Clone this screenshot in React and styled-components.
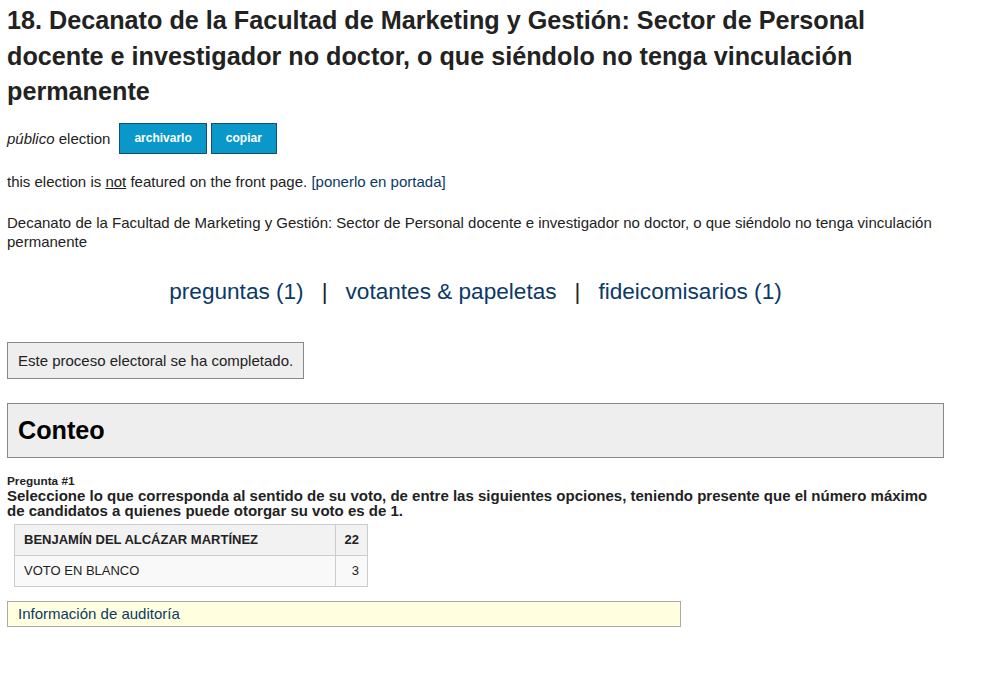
import React from "react";
import styled, { createGlobalStyle } from "styled-components";

const Global = createGlobalStyle`
  html, body { margin: 0; padding: 0; background: #fff; }
  body { font-family: "Liberation Sans", Arial, sans-serif; color: #222; }
`;

const Page = styled.div`
  width: 937px;
  padding: 3px 7px 40px 7px;
`;

const Title = styled.h2`
  margin: 0;
  font-size: 25.2px;
  line-height: 35.5px;
  font-weight: bold;
  color: #222;
`;

const MetaRow = styled.div`
  display: flex;
  align-items: center;
  margin-top: 13px;
  font-size: 15px;
`;

const MetaText = styled.span`
  margin-right: 9px;
  em { font-style: italic; }
`;

const Button = styled.button`
  font-family: "Liberation Sans", Arial, sans-serif;
  font-size: 12px;
  font-weight: bold;
  color: #fff;
  background: #0a98cb;
  border: 1px solid #134f6e;
  height: 31px;
  padding: 0 14px;
  margin-right: 4px;
  cursor: pointer;
`;

const Para = styled.p`
  margin: ${(p) => p.$mt || 0}px 0 0 0;
  font-size: 15px;
  line-height: 19px;
`;

const Link = styled.a`
  color: #0b3a66;
  text-decoration: none;
`;

const Nav = styled.div`
  display: flex;
  justify-content: center;
  align-items: center;
  gap: 18px;
  margin-top: 28px;
  font-size: 22.6px;
  line-height: 26px;
  color: #0b3a66;
`;

const NavLink = styled.a`
  color: #0b3a66;
  text-decoration: none;
`;

const Sep = styled.span`
  color: #222;
`;

const Notice = styled.div`
  display: inline-block;
  margin-top: 37px;
  padding: 9px 10px;
  background: #eee;
  border: 1px solid #888;
  font-size: 15px;
  line-height: 17px;
`;

const SectionBox = styled.div`
  margin-top: 24px;
  padding: 0 10px;
  height: 53px;
  display: flex;
  align-items: center;
  background: #eee;
  border: 1px solid #888;
`;

const SectionTitle = styled.h2`
  margin: 0;
  font-size: 25.2px;
  font-weight: bold;
  color: #000;
`;

const QLabel = styled.div`
  margin-top: 17px;
  font-size: 11.8px;
  font-weight: bold;
  line-height: 13px;
`;

const QText = styled.div`
  font-size: 15px;
  font-weight: bold;
  line-height: 15px;
`;

const Table = styled.table`
  margin: 6px 0 0 7px;
  border-collapse: collapse;
  font-size: 13px;
`;

const Row = styled.tr`
  background: ${(p) => (p.$winner ? "#f2f2f2" : "#f9f9f9")};
`;

const NameCell = styled.td`
  border: 1px solid #ccc;
  height: 30px;
  padding: 0 10px 0 9px;
  width: 301px;
  font-weight: ${(p) => (p.$winner ? "bold" : "normal")};
`;

const CountCell = styled.td`
  border: 1px solid #ccc;
  padding: 0 8px;
  text-align: right;
  width: 15px;
  font-weight: ${(p) => (p.$winner ? "bold" : "normal")};
`;

const Audit = styled.div`
  margin-top: 14px;
  width: 652px;
  padding: 0 10px;
  height: 24px;
  display: flex;
  align-items: center;
  background: #ffffe0;
  border: 1px solid #aaa;
  font-size: 15px;
  color: #0b3a66;
`;

export default function App() {
  const results = [
    { name: "BENJAMÍN DEL ALCÁZAR MARTÍNEZ", count: 22, winner: true },
    { name: "VOTO EN BLANCO", count: 3, winner: false },
  ];
  return (
    <>
      <Global />
      <Page>
        <Title>
          18. Decanato de la Facultad de Marketing y Gestión: Sector de Personal
          docente e investigador no doctor, o que siéndolo no tenga vinculación
          permanente
        </Title>
        <MetaRow>
          <MetaText>
            <em>público</em> election
          </MetaText>
          <Button>archivarlo</Button>
          <Button>copiar</Button>
        </MetaRow>
        <Para $mt={18}>
          this election is <u>not</u> featured on the front page.{" "}
          <Link href="#">[ponerlo en portada]</Link>
        </Para>
        <Para $mt={22}>
          Decanato de la Facultad de Marketing y Gestión: Sector de Personal
          docente e investigador no doctor, o que siéndolo no tenga vinculación
          permanente
        </Para>
        <Nav>
          <NavLink href="#">preguntas (1)</NavLink>
          <Sep>|</Sep>
          <NavLink href="#">votantes &amp; papeletas</NavLink>
          <Sep>|</Sep>
          <NavLink href="#">fideicomisarios (1)</NavLink>
        </Nav>
        <Notice>Este proceso electoral se ha completado.</Notice>
        <SectionBox>
          <SectionTitle>Conteo</SectionTitle>
        </SectionBox>
        <QLabel>Pregunta #1</QLabel>
        <QText>
          Seleccione lo que corresponda al sentido de su voto, de entre las
          siguientes opciones, teniendo presente que el número máximo de
          candidatos a quienes puede otorgar su voto es de 1.
        </QText>
        <Table>
          <tbody>
            {results.map((r) => (
              <Row key={r.name} $winner={r.winner}>
                <NameCell $winner={r.winner}>{r.name}</NameCell>
                <CountCell $winner={r.winner}>{r.count}</CountCell>
              </Row>
            ))}
          </tbody>
        </Table>
        <Audit>Información de auditoría</Audit>
      </Page>
    </>
  );
}
